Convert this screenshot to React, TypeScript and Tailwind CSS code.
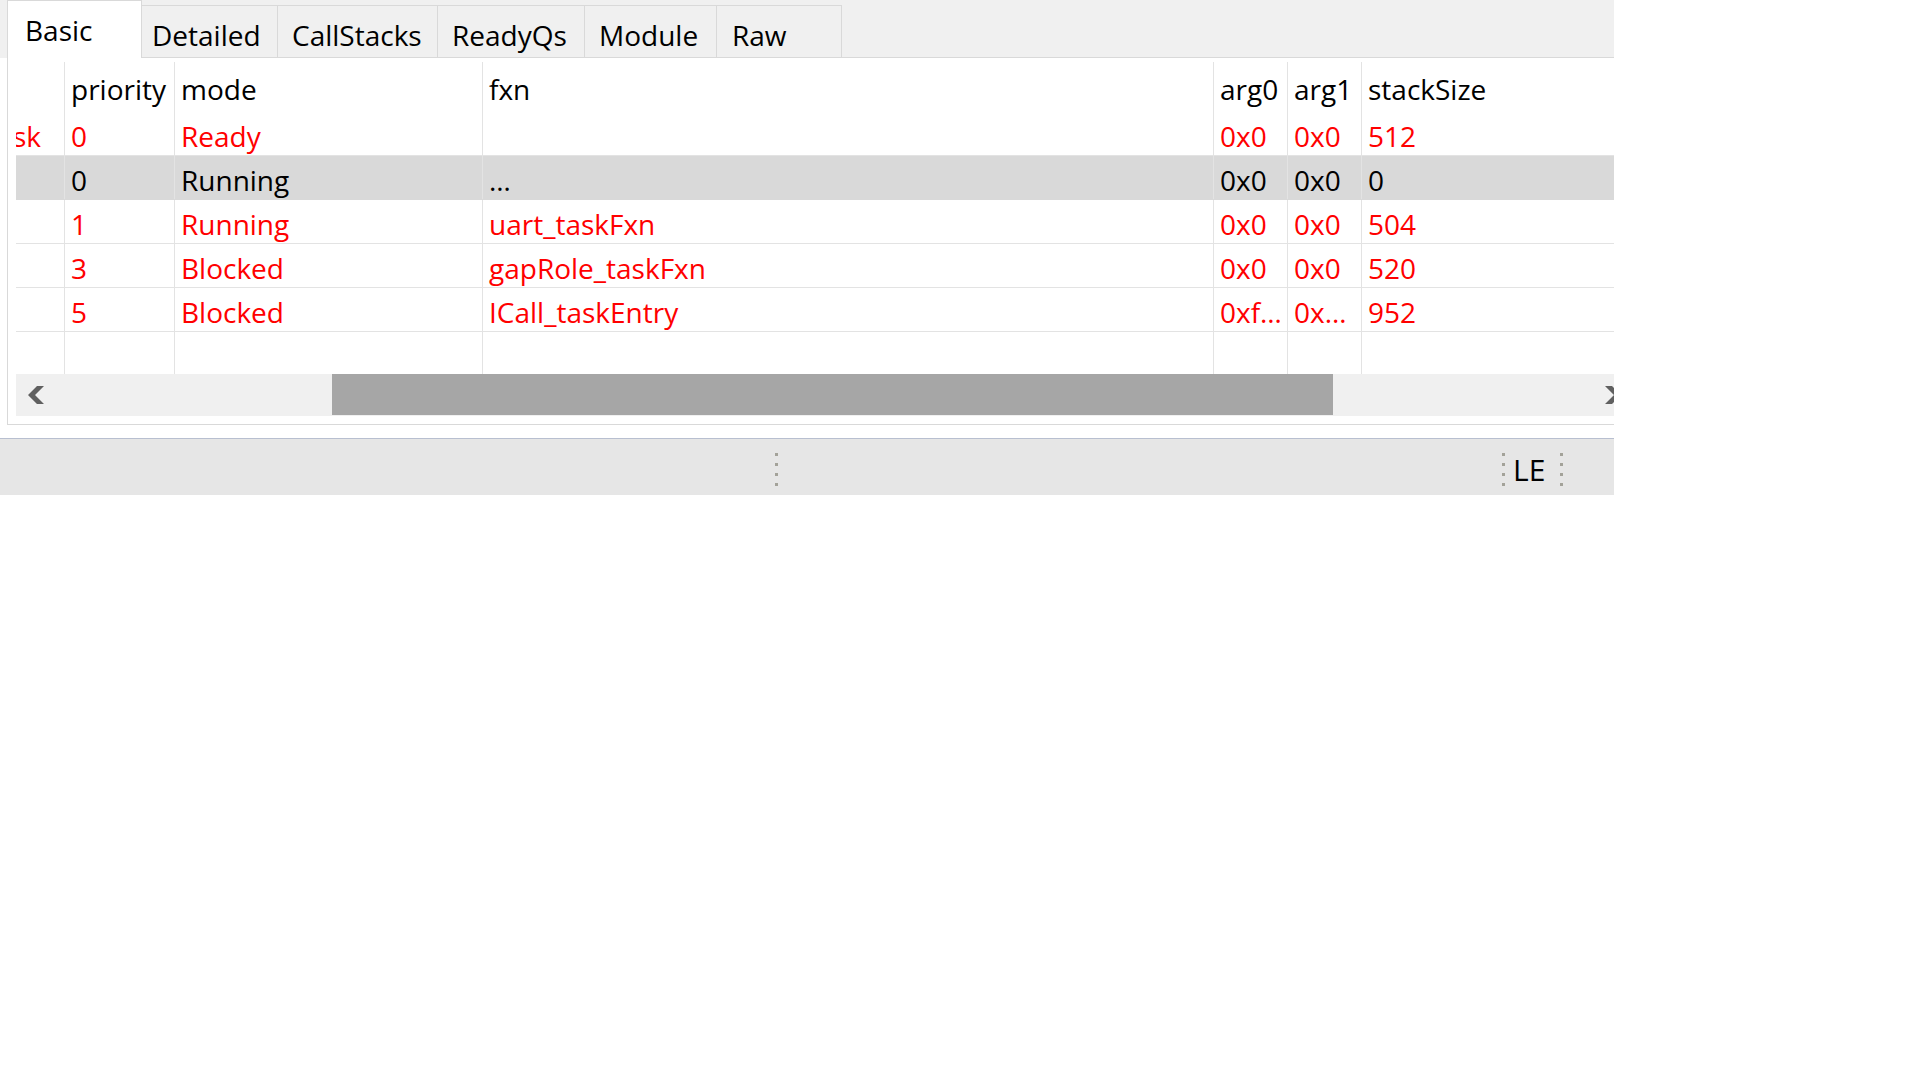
import React from "react";

type Row = {
  c0: string;
  pri: string;
  mode: string;
  fxn: string;
  a0: string;
  a1: string;
  ss: string;
  sel?: boolean;
};

const rows: Row[] = [
  { c0: "sk", pri: "0", mode: "Ready", fxn: "", a0: "0x0", a1: "0x0", ss: "512" },
  { c0: "", pri: "0", mode: "Running", fxn: "…", a0: "0x0", a1: "0x0", ss: "0", sel: true },
  { c0: "", pri: "1", mode: "Running", fxn: "uart_taskFxn", a0: "0x0", a1: "0x0", ss: "504" },
  { c0: "", pri: "3", mode: "Blocked", fxn: "gapRole_taskFxn", a0: "0x0", a1: "0x0", ss: "520" },
  { c0: "", pri: "5", mode: "Blocked", fxn: "ICall_taskEntry", a0: "0xf…", a1: "0x…", ss: "952" },
];

const tabs = [
  { label: "Detailed", w: "w-[136px]", pl: "pl-[10px]" },
  { label: "CallStacks", w: "w-[160px]", pl: "pl-[14px]" },
  { label: "ReadyQs", w: "w-[147px]", pl: "pl-[14px]" },
  { label: "Module", w: "w-[132px]", pl: "pl-[14px]" },
  { label: "Raw", w: "w-[125px]", pl: "pl-[15px]" },
];

function Grip() {
  return (
    <div className="flex flex-col gap-[7px] w-[3px] shrink-0">
      <div className="w-[3px] h-[3px] bg-[#a3a299]" />
      <div className="w-[3px] h-[3px] bg-[#a3a299]" />
      <div className="w-[3px] h-[3px] bg-[#a3a299]" />
      <div className="w-[3px] h-[3px] bg-[#a3a299]" />
    </div>
  );
}

const cell = "h-full border-l border-[#e3e3e3] pl-[6px] overflow-hidden whitespace-nowrap shrink-0";

export default function App() {
  return (
    <div className="w-screen h-screen bg-white font-['Open_Sans',sans-serif] text-[28px] leading-none text-black">
      <div className="w-[1614px] overflow-hidden">
        {/* Tab bar */}
        <div className="w-[1660px] h-[58px] bg-[#f0f0f0] flex items-start">
          <div className="w-[7px] h-full shrink-0" />
          <div className="w-[135px] h-[58px] bg-white border-l border-t border-r border-[#d9d9d9] pl-[17px] pt-[15px] shrink-0">
            Basic
          </div>
          {tabs.map((t) => (
            <div
              key={t.label}
              className={`${t.w} ${t.pl} mt-[5px] h-[53px] border-t border-r border-b border-[#d9d9d9] pt-[15px] shrink-0`}
            >
              {t.label}
            </div>
          ))}
          <div className="flex-1 h-full border-b border-[#d9d9d9]" />
        </div>

        {/* Pane */}
        <div className="ml-[7px] w-[1634px] border-l border-r border-b border-[#d9d9d9] pl-[8px] pt-[4px] pb-[8px]">
          <div className="w-[1617px]">
            {/* header */}
            <div className="flex h-[50px]">
              <div className="w-[48px] h-full shrink-0" />
              <div className={`${cell} w-[110px] pt-[13px]`}>priority</div>
              <div className={`${cell} w-[308px] pt-[13px]`}>mode</div>
              <div className={`${cell} w-[731px] pt-[13px]`}>fxn</div>
              <div className={`${cell} w-[74px] pt-[13px]`}>arg0</div>
              <div className={`${cell} w-[74px] pt-[13px]`}>arg1</div>
              <div className={`${cell} flex-1 pt-[13px]`}>stackSize</div>
            </div>
            {rows.map((r, i) => (
              <div
                key={i}
                className={`flex h-[44px] border-b ${r.sel ? "bg-[#d9d9d9] border-[#d9d9d9] text-black" : "border-[#e3e3e3] text-[#ff0000]"}`}
              >
                <div className="w-[48px] h-full overflow-hidden whitespace-nowrap shrink-0 pt-[10px]">
                  <span className="inline-block -ml-[3px]">{r.c0}</span>
                </div>
                <div className={`${cell} w-[110px] pt-[10px]`}>{r.pri}</div>
                <div className={`${cell} w-[308px] pt-[10px]`}>{r.mode}</div>
                <div className={`${cell} w-[731px] pt-[10px]`}>{r.fxn}</div>
                <div className={`${cell} w-[74px] pt-[10px]`}>{r.a0}</div>
                <div className={`${cell} w-[74px] pt-[10px]`}>{r.a1}</div>
                <div className={`${cell} flex-1 pt-[10px]`}>{r.ss}</div>
              </div>
            ))}
            {/* empty area */}
            <div className="flex h-[42px]">
              <div className="w-[48px] h-full shrink-0" />
              <div className={`${cell} w-[110px]`} />
              <div className={`${cell} w-[308px]`} />
              <div className={`${cell} w-[731px]`} />
              <div className={`${cell} w-[74px]`} />
              <div className={`${cell} w-[74px]`} />
              <div className={`${cell} flex-1`} />
            </div>
            {/* horizontal scrollbar */}
            <div className="flex h-[42px] bg-[#f0f0f0]">
              <div className="w-[316px] h-full shrink-0 flex items-center pl-[12px]">
                <svg width="16" height="18" viewBox="0 0 16 18">
                  <polygon points="9,0 16,0 7,9 16,18 9,18 0,9" fill="#606060" />
                </svg>
              </div>
              <div className="w-[1001px] h-[41px] bg-[#a6a6a6] shrink-0" />
              <div className="flex-1 h-full flex items-center justify-end pr-[12px]">
                <svg width="16" height="18" viewBox="0 0 16 18">
                  <polygon points="0,0 7,0 16,9 7,18 0,18 9,9" fill="#606060" />
                </svg>
              </div>
            </div>
          </div>
        </div>

        {/* Status bar */}
        <div className="mt-[13px] h-[57px] bg-[#e6e6e6] border-t border-[#b8bfd0] flex items-start pt-[14px]">
          <div className="w-[775px] shrink-0" />
          <Grip />
          <div className="w-[724px] shrink-0" />
          <Grip />
          <div className="ml-[8px] -mt-[4px] text-[30px] leading-none pt-[6px] shrink-0">LE</div>
          <div className="w-[15px] shrink-0" />
          <Grip />
        </div>
      </div>
    </div>
  );
}
